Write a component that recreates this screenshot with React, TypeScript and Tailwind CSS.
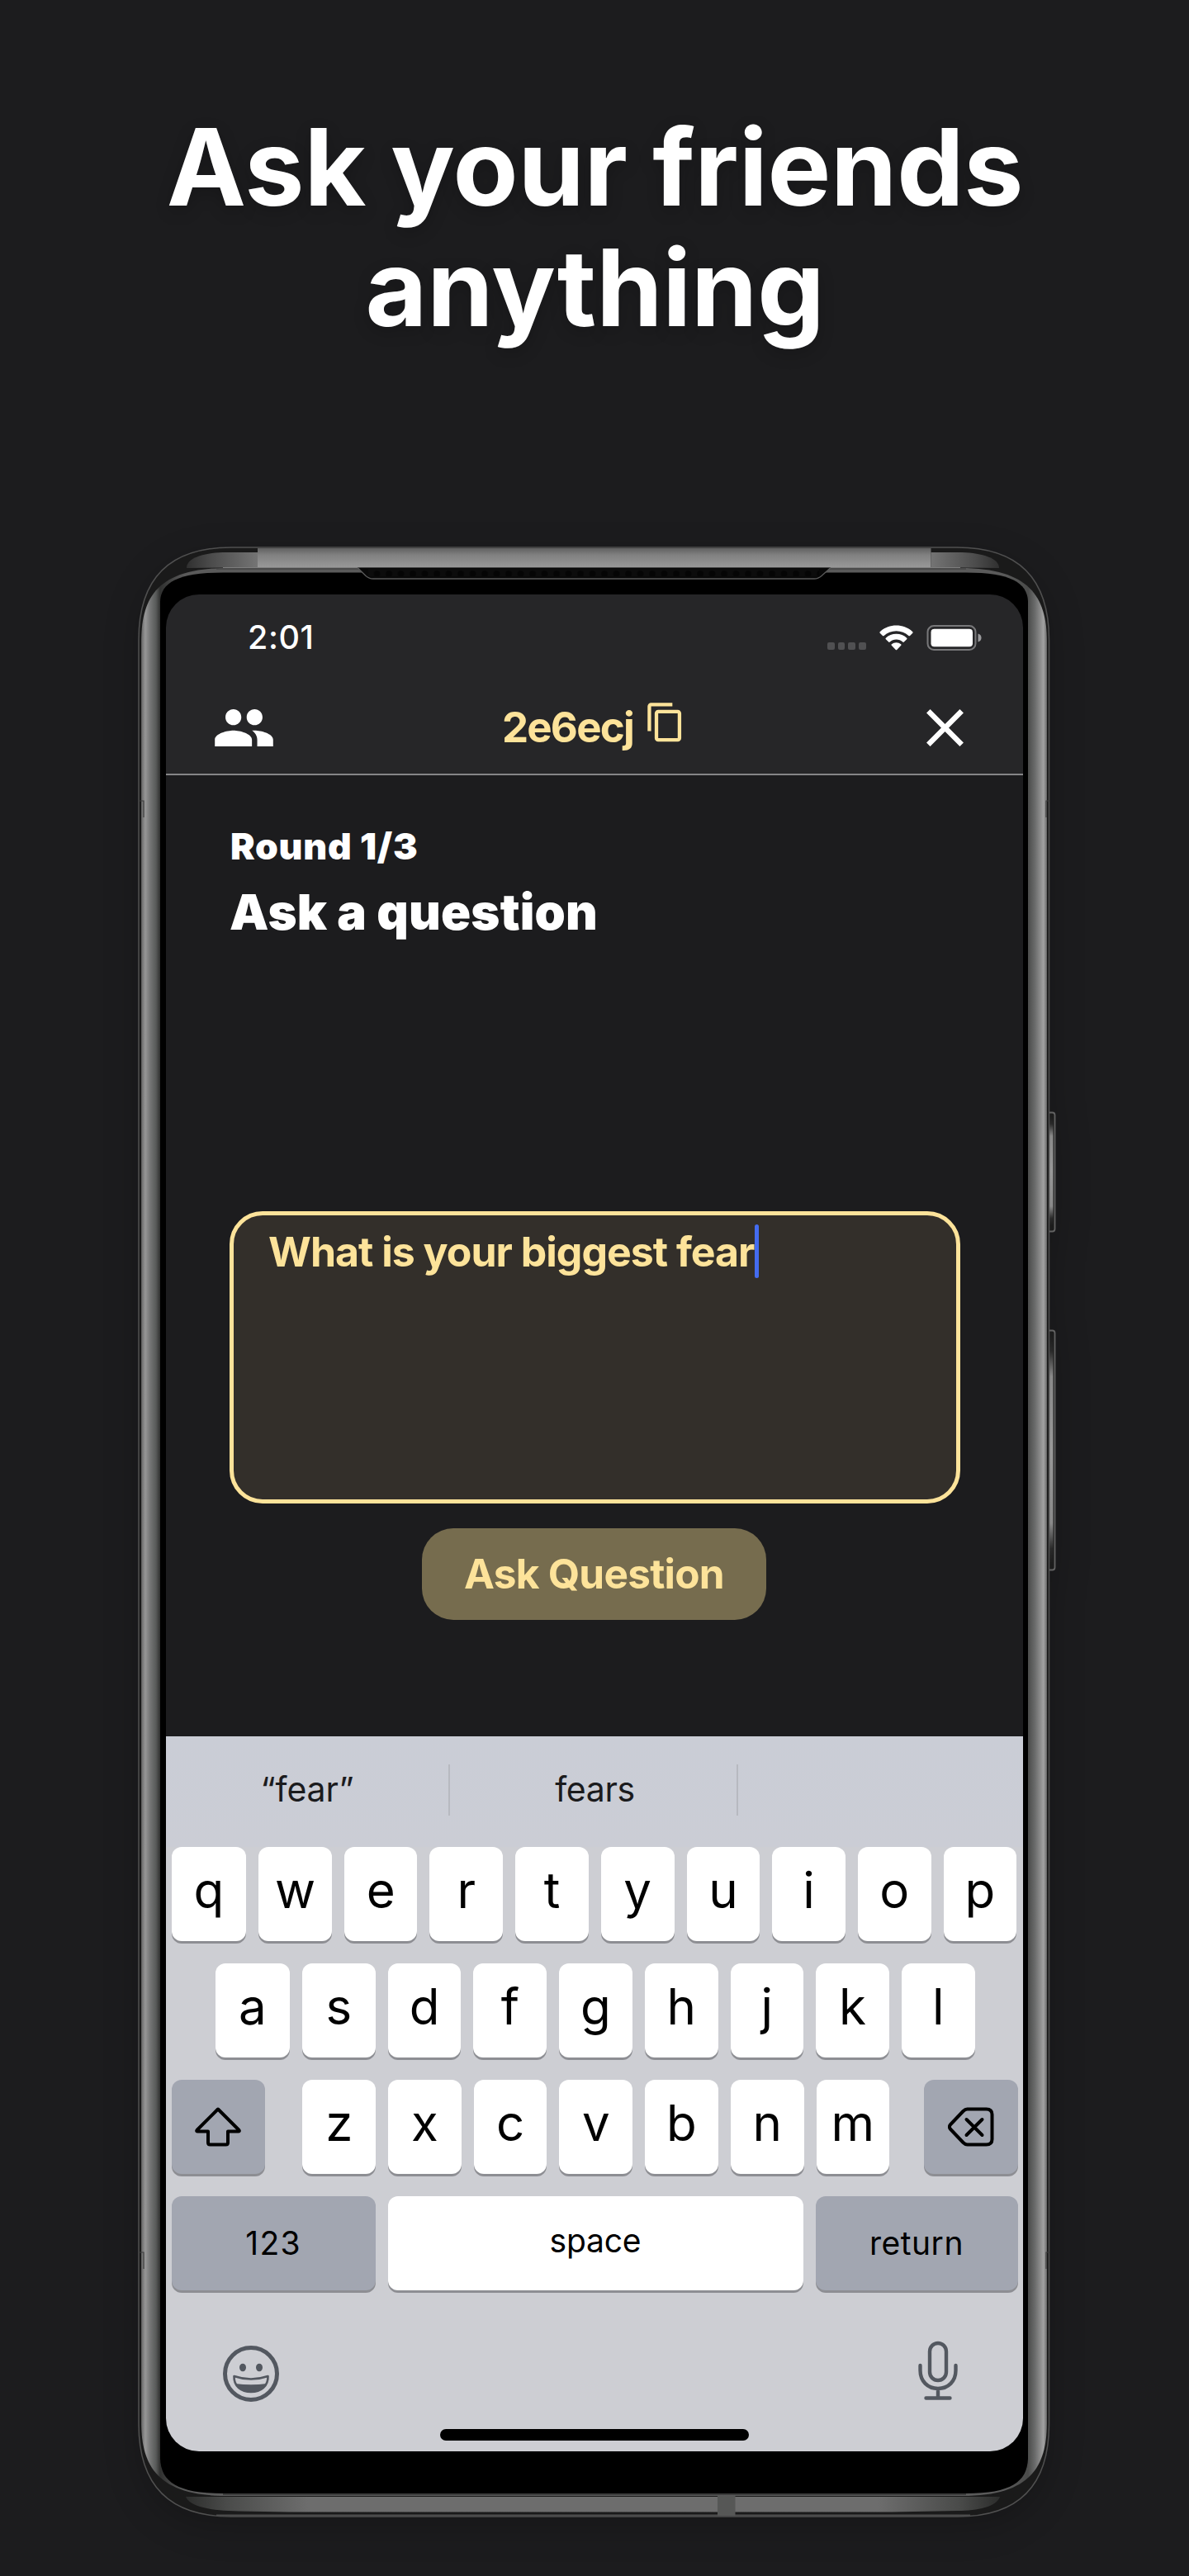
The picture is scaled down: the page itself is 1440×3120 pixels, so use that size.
import React from "react";
import { MdClose, MdContentCopy, MdPeople } from "react-icons/md";

const OUTER =
  "M168 775C168 712 195 663 280 663H1159C1244 663 1270.5 712 1270.5 775V2936C1270.5 3000 1243 3048 1160 3048H280C196 3048 168 3000 168 2936Z";
const GLASS =
  "M171 775C172 724 190 688 275 688H1163C1248 688 1267 724 1268 775V2936C1267 2986 1250 3023 1165 3023H275C190 3023 172 2986 171 2936Z";
const BEZEL =
  "M194 728C195 706 215 693.500 270 693.500H1170C1224 693.500 1244 706 1245 728V2978C1244 3006 1224 3020 1170 3020H270C215 3020 195 3006 194 2978Z";

function PhoneFrame() {
  return (
    <svg
      className="absolute -left-[41px] -top-[65px] h-[2400px] w-[1120px] drop-shadow-[0_12px_20px_rgba(0,0,0,0.2)]"
      viewBox="160 655 1120 2400"
      fill="none"
    >
      <defs>
        <linearGradient id="glass" gradientUnits="userSpaceOnUse" x1="168" y1="0" x2="1271" y2="0">
          <stop offset="0.002" stopColor="#3a3a3a" />
          <stop offset="0.0036" stopColor="#6f6f6f" />
          <stop offset="0.0072" stopColor="#979797" />
          <stop offset="0.0125" stopColor="#757676" />
          <stop offset="0.019" stopColor="#585a59" />
          <stop offset="0.0235" stopColor="#303130" />
          <stop offset="0.05" stopColor="#5a5a5a" />
          <stop offset="0.95" stopColor="#5a5a5a" />
          <stop offset="0.9765" stopColor="#4a4b4a" />
          <stop offset="0.984" stopColor="#6a6b6b" />
          <stop offset="0.99" stopColor="#8c8c8c" />
          <stop offset="0.9935" stopColor="#a2a2a2" />
          <stop offset="0.9965" stopColor="#777777" />
          <stop offset="0.998" stopColor="#3a3a3a" />
        </linearGradient>
        <linearGradient id="topBand" x1="0" y1="0" x2="0" y2="1">
          <stop offset="0" stopColor="#606060" />
          <stop offset="0.35" stopColor="#808080" />
          <stop offset="1" stopColor="#989898" />
        </linearGradient>
        <linearGradient id="topLeft" x1="0" y1="0" x2="1" y2="0">
          <stop offset="0" stopColor="#303030" />
          <stop offset="0.35" stopColor="#4c4c4c" />
          <stop offset="1" stopColor="#747474" />
        </linearGradient>
        <linearGradient id="topRight" x1="1" y1="0" x2="0" y2="0">
          <stop offset="0" stopColor="#303030" />
          <stop offset="0.35" stopColor="#4c4c4c" />
          <stop offset="1" stopColor="#747474" />
        </linearGradient>
        <linearGradient id="bottomBand" x1="0" y1="0" x2="1" y2="0">
          <stop offset="0" stopColor="#2c2d2c" />
          <stop offset="0.05" stopColor="#4a4b4a" />
          <stop offset="0.15" stopColor="#6d6d6d" />
          <stop offset="0.85" stopColor="#6d6d6d" />
          <stop offset="0.95" stopColor="#4a4b4a" />
          <stop offset="1" stopColor="#2c2d2c" />
        </linearGradient>
        <linearGradient id="button" x1="0" y1="0" x2="0" y2="1">
          <stop offset="0" stopColor="#1c1c1c" />
          <stop offset="0.07" stopColor="#2a2a2a" />
          <stop offset="0.18" stopColor="#8a8a8a" />
          <stop offset="0.5" stopColor="#999999" />
          <stop offset="0.82" stopColor="#8a8a8a" />
          <stop offset="0.93" stopColor="#2a2a2a" />
          <stop offset="1" stopColor="#1c1c1c" />
        </linearGradient>
        <pattern id="grille" width="14.500" height="10" patternUnits="userSpaceOnUse">
          <rect width="14.500" height="10" fill="#0c0c0c" />
          <circle cx="7" cy="5" r="4" fill="#050505" />
        </pattern>
      </defs>
      <rect x="1266" y="1347.500" width="11.500" height="144" rx="3" fill="#1c1c1c" stroke="#626262" strokeWidth="1.800" />
      <rect x="1268.500" y="1352" width="7" height="133" fill="url(#button)" />
      <rect x="1266" y="1611.500" width="11.500" height="290" rx="3" fill="#1c1c1c" stroke="#626262" strokeWidth="1.800" />
      <rect x="1269" y="1617" width="6.500" height="278" fill="url(#button)" />
      <path d={OUTER} fill="#1a1a1a" stroke="#505050" strokeWidth="1.500" />
      <path d="M312 664H1127.500V687H312Z" fill="url(#topBand)" />
      <path d="M312 669H270C245 670 226 676 226 688L312 687Z" fill="url(#topLeft)" />
      <path d="M1127.500 669H1165C1190 670 1210 676 1210 688L1127.500 687Z" fill="url(#topRight)" />
      <path d={GLASS} fill="url(#glass)" />
      <path d="M270 687.500H1163" stroke="#7d7d7d" strokeWidth="1" />
      <path d="M262 689H1170" stroke="#3a3a3a" strokeWidth="1" />
      <path d={BEZEL} fill="#000" />
      <path d="M433 687.500H1006L995 698Q991 701 986 701H452Q447 701 443 698Z" fill="#080808" />
      <rect x="446" y="689" width="546" height="9" fill="url(#grille)" />
      <path d="M433 687.500L443 697.500Q447 701 452 701H986Q991 701 995 697.500L1006 687.500" stroke="#5a5a5a" strokeWidth="1.300" />
      <path d="M225 3024H1211C1207 3036 1184 3041 1160 3041L1080 3042.500H350L290 3041.500C255 3041 230 3036 225 3024Z" fill="url(#bottomBand)" />
      <path d="M270 3021H1170" stroke="#3c3c3c" strokeWidth="2" />
      <path d="M262 3046.500H1175" stroke="#4c4c4c" strokeWidth="2" />
      <rect x="869" y="3023" width="21.500" height="24" fill="#565756" />
      <path d="M168 970H174V990M168 2728H174V2748M1271 970H1267V990M1271 2728H1267V2748" stroke="#3d3d3d" strokeWidth="1.200" />
    </svg>
  );
}

function StatusBar() {
  return (
    <div className="flex h-[59px] items-center pl-[99px] pr-[50px]">
      <span className="text-[39.5px] font-[550] leading-[59px] tracking-[0.6px] text-white">2:01</span>
      <div className="ml-auto flex h-[31px] items-end">
        <div className="mr-[16px] flex gap-[4px] pb-[1px]">
          {[0, 1, 2, 3].map((i) => (
            <span key={i} className="size-[8.6px] rounded-[2px] bg-[#505052]" />
          ))}
        </div>
        <svg className="mr-[16px] h-[31px] w-[41px]" viewBox="0 0 41 31">
          <path fill="#fff" d="M20.500 0.500C28.500 0.500 35.300 3.400 40.300 8.200Q41 9 40.300 9.700L37 13Q36.200 13.700 35.400 13C31.400 9.300 26.200 7.200 20.500 7.200S9.600 9.300 5.600 13Q4.800 13.700 4 13L.7 9.700Q0 9 .7 8.200C5.700 3.400 12.500.5 20.500.5Z" />
          <path fill="#fff" d="M20.500 10.800C25.500 10.800 29.900 12.700 33.200 15.700Q34 16.500 33.200 17.200L29.800 20.600Q29.100 21.200 28.300 20.600C26.200 18.700 23.500 17.500 20.500 17.500S14.800 18.700 12.700 20.600Q11.900 21.200 11.200 20.600L7.800 17.200Q7 16.500 7.800 15.700C11.100 12.700 15.500 10.800 20.500 10.800Z" />
          <path fill="#fff" d="M20.500 21.200Q23.800 21.200 26.200 23.200Q27 24 26.200 24.800L21.200 30Q20.500 30.700 19.800 30L14.800 24.800Q14 24 14.800 23.200Q17.200 21.200 20.500 21.200Z" />
        </svg>
        <svg className="h-[31px] w-[67px]" viewBox="0 0 67 31" fill="none">
          <rect x="1.500" y="1" width="58" height="29" rx="7.500" stroke="#78787a" strokeWidth="2" />
          <rect x="5.500" y="4.700" width="50.500" height="21.500" rx="4" fill="#fff" />
          <path d="M62.500 10.500Q66.500 11.500 66.500 15.500T62.500 20.500Z" fill="#9a9a9c" />
        </svg>
      </div>
    </div>
  );
}

function Header() {
  return (
    <header className="h-[219px] border-b-2 border-[#858587] bg-[#262628] pt-[23px]">
      <StatusBar />
      <div className="mt-[23px] grid h-[112px] grid-cols-3 items-center pl-[56px] pr-[56px] text-white">
        <MdPeople className="size-[77px]" />
        <div className="flex items-center justify-center text-[#fde39a]">
          <span className="text-[51px] font-bold leading-[60px] tracking-[-1.8px]">2e6ecj</span>
          <MdContentCopy className="-mt-[13px] ml-[13px] size-[51.5px]" />
        </div>
        <MdClose className="size-[77px] justify-self-end" />
      </div>
    </header>
  );
}

function Question() {
  return (
    <section className="flex h-[1164px] flex-col bg-[#1c1c1e] pl-[77px] pr-[76px] pt-[56px]">
      <p className="pl-px text-[44.5px] font-black leading-[60px] tracking-[0.75px] text-white">Round 1/3</p>
      <h2 className="mt-[9px] text-[59.7px] font-black leading-[80px] tracking-[0.22px] text-white">Ask a question</h2>
      <div className="mt-[323px] flex h-[354px] items-start rounded-[40px] border-[5px] border-[#fde39a] bg-[#332f2a] pl-[42px] pt-[11px]">
        <span className="text-[50px] font-bold leading-[66px] tracking-[-1px] text-[#fde39a]">What is your biggest fear</span>
        <span className="ml-px h-[65px] w-[5px] rounded-full bg-[#446cf0]" />
      </div>
      <button className="ml-[233px] mt-[30px] flex h-[111px] w-[417px] items-center justify-center rounded-[38px] bg-[#766c4e] text-[49.5px] font-bold tracking-[-0.75px] text-[#fde39a]">
        Ask Question
      </button>
    </section>
  );
}

const KEY =
  "flex h-[114px] items-center justify-center rounded-[12px] text-black shadow-[0_3px_0_#8d8e93]";

function Letters({ row, wideFirst = false }: { row: string; wideFirst?: boolean }) {
  return (
    <div className="flex gap-[15px]">
      {row.split("").map((c, i) => (
        <span
          key={c}
          className={`${KEY} ${wideFirst && i === 0 ? "w-[90.6px]" : "w-[88.7px]"} bg-white pb-[11px] text-[60px] font-[370]`}
        >
          {c}
        </span>
      ))}
    </div>
  );
}

function Keyboard() {
  return (
    <section className="h-[866px] bg-[#cdced3]">
      <div className="grid h-[134px] grid-cols-[344px_349px_1fr] items-center bg-[linear-gradient(#cacdd6,#cbcdd5)] pb-[5px] text-[41px] text-[#1b1b1d]">
        <span className="flex h-[62px] items-center justify-center border-r-2 border-[#b7b9c0] tracking-[-0.1px]">“fear”</span>
        <span className="flex h-[62px] items-center justify-center border-r-2 border-[#b7b9c0] pl-[4px] tracking-[-0.4px]">fears</span>
      </div>
      <div className="flex flex-col gap-[27px] pl-[6.5px] pr-[6px]">
        <Letters row="qwertyuiop" wideFirst />
        <div className="pl-[53px]">
          <Letters row="asdfghjkl" wideFirst />
        </div>
        <div className="flex">
          <span className={`${KEY} mr-[45.4px] w-[113.5px] bg-[#a2a6b1]`}>
            <svg className="h-[48px] w-[56px]" viewBox="0 0 56 48" fill="none" stroke="#000" strokeWidth="4" strokeLinejoin="round">
              <path d="M28 2.500L53.500 28Q54.500 29.500 52.500 29.500H40V43Q40 45.500 37.500 45.500H18.500Q16 45.500 16 43V29.500H3.500Q1.500 29.500 2.500 28Z" />
            </svg>
          </span>
          <Letters row="zxcvbnm" />
          <span className={`${KEY} ml-auto w-[113.5px] bg-[#a2a6b1]`}>
            <svg className="h-[48px] w-[56px]" viewBox="0 0 56 48" fill="none" stroke="#000" strokeWidth="4" strokeLinecap="round" strokeLinejoin="round">
              <path d="M23.500 2.500H46.500Q53.500 2.500 53.500 9V39Q53.500 45.500 46.500 45.500H23.500Q21 45.500 18.500 43L2.800 26.500Q1 24 2.800 21.500L18.500 5Q21 2.500 23.500 2.500Z" />
              <path d="M22.500 15L41.500 34M41.500 15L22.500 34" />
            </svg>
          </span>
        </div>
        <div className="flex gap-[15px] text-[39px]">
          <span className={`${KEY} w-[247px] bg-[#a2a6b1] tracking-[1.2px]`}>123</span>
          <span className={`${KEY} flex-1 bg-white pb-[6px] tracking-[-0.2px]`}>space</span>
          <span className={`${KEY} w-[245px] bg-[#a2a6b1] tracking-[0.5px]`}>return</span>
        </div>
      </div>
      <div className="flex justify-between pl-[69px] pr-[79px] pt-[58px]">
        <svg className="mt-[9px] size-[68px]" viewBox="0 0 68 68" fill="none">
          <circle cx="34" cy="34" r="31.500" stroke="#535860" strokeWidth="5" />
          <ellipse cx="24" cy="26.500" rx="4" ry="4.800" fill="#535860" />
          <ellipse cx="44" cy="26.500" rx="4" ry="4.800" fill="#535860" />
          <path d="M13.500 37Q34 44 54.500 37C55 49 46 56 34 56S13 49 13.500 37Z" stroke="#535860" strokeWidth="2.600" strokeLinejoin="round" />
          <path d="M15 46Q34 48.500 53 46C49 53.500 42 56.500 34 56.500S19 53.500 15 46Z" fill="#535860" />
        </svg>
        <svg className="mt-[3px] h-[72px] w-[48px]" viewBox="0 3 48 72" fill="none" stroke="#535860" strokeWidth="4.400" strokeLinecap="round">
          <rect x="14" y="6" width="20" height="45" rx="10" />
          <path d="M2.500 33V39C2.500 52 11.500 61 24 61S45.500 52 45.500 39V33M24 61V72M9.500 72.500H38.500" />
        </svg>
      </div>
      <div className="mx-auto mt-[33px] h-[14px] w-[374px] rounded-full bg-black" />
    </section>
  );
}

export default function App() {
  return (
    <main className="h-[3120px] w-[1440px] overflow-hidden bg-[#1c1c1e] pt-[129px] font-['Inter',sans-serif]">
      <h1 className="pl-px text-center text-[129px] font-bold leading-[146px] tracking-[-0.2px] text-white [text-shadow:0_6px_20px_rgba(0,0,0,0.2)]">
        Ask your friends
        <br />
        anything
      </h1>
      <div className="relative ml-[201px] mt-[299px] w-[1037.5px]">
        <PhoneFrame />
        <div className="relative h-[2249px] overflow-hidden rounded-[40px]">
          <Header />
          <Question />
          <Keyboard />
        </div>
      </div>
    </main>
  );
}
